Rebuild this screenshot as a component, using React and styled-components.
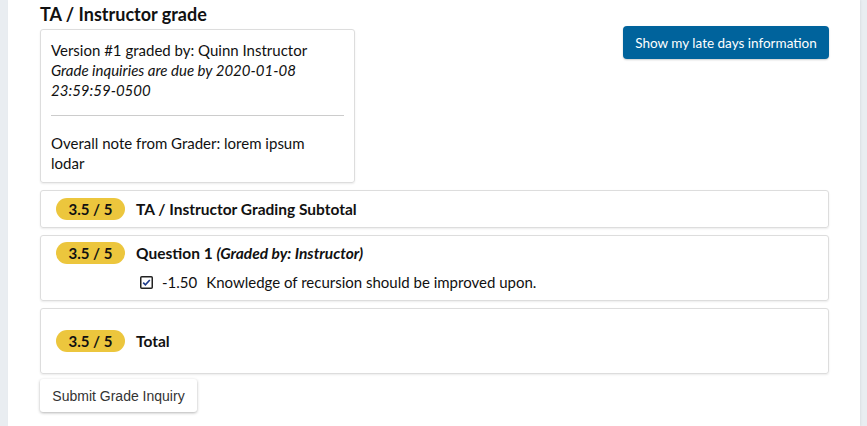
import React from "react";
import styled, { createGlobalStyle } from "styled-components";

const GlobalStyle = createGlobalStyle`
  html, body {
    margin: 0;
    padding: 0;
    background: #e9edf1;
  }
  body {
    font-family: Lato, "Noto Sans", sans-serif;
    color: #111;
  }
`;

const Page = styled.div`
  margin: 0 7px 0 8px;
  min-height: 426px;
  background: #fff;
  padding: 0 31px 0 32px;
  box-sizing: border-box;
  box-shadow: 1px 0 2px rgba(0, 0, 0, 0.06);
`;

const Top = styled.div`
  display: flex;
  justify-content: space-between;
  align-items: flex-start;
`;

const Heading = styled.h2`
  margin: 0;
  padding-top: 3px;
  font-size: 18px;
  line-height: 23px;
  font-weight: 700;
  height: 26px;
`;

const InfoBox = styled.div`
  width: 315px;
  box-sizing: border-box;
  border: 1px solid #ddd;
  border-radius: 3px;
  box-shadow: 0 1px 2px rgba(0, 0, 0, 0.08);
  padding: 10px 10px 9px 10px;
  font-size: 15px;
  line-height: 20px;
`;

const Italic = styled.div`
  font-style: italic;
`;

const Rule = styled.hr`
  border: 0;
  border-top: 1px solid #ccc;
  margin: 15px 0 17px;
`;

const LateButton = styled.button`
  flex-shrink: 0;
  white-space: nowrap;
  margin-top: 26px;
  width: 206px;
  height: 33px;
  padding: 0;
  border: 0;
  border-radius: 4px;
  background: #00639c;
  color: #fff;
  font-family: Lato, "Noto Sans", sans-serif;
  font-size: 13.5px;
  font-weight: 400;
  box-shadow: 0 1px 2px rgba(0, 0, 0, 0.2);
  cursor: pointer;
`;

const Cards = styled.div`
  margin-top: 7px;
  display: flex;
  flex-direction: column;
  gap: 7px;
`;

const Card = styled.div`
  border: 1px solid #ddd;
  border-radius: 3px;
  box-shadow: 0 1px 2px rgba(0, 0, 0, 0.08);
  padding: ${(p) => p.$pad || "6px 15px"};
  min-height: ${(p) => p.$minH || "auto"};
  box-sizing: border-box;
  display: flex;
  flex-direction: column;
  justify-content: center;
`;

const HeadRow = styled.div`
  display: flex;
  align-items: center;
  gap: 11px;
`;

const Badge = styled.span`
  display: inline-flex;
  align-items: center;
  justify-content: center;
  width: 69px;
  height: 22px;
  border-radius: 11px;
  background: #ecc63d;
  font-size: 15px;
  font-weight: 700;
  color: #111;
`;

const Title = styled.span`
  font-size: 15.5px;
  font-weight: 700;
  em {
    font-style: italic;
  }
`;

const Mark = styled.div`
  display: flex;
  align-items: center;
  margin: 8px 0 2px 84px;
  font-size: 15px;
  line-height: 20px;
  svg {
    margin-right: 9px;
  }
`;

const Points = styled.span`
  margin-right: 9px;
`;

const SubmitButton = styled.button`
  margin-top: 5px;
  width: 157px;
  height: 33px;
  border: 0;
  border-radius: 3px;
  background: #fff;
  color: #333;
  font-family: "Liberation Sans", Arial, sans-serif;
  font-size: 14px;
  box-shadow: 0 1px 3px rgba(0, 0, 0, 0.3);
  cursor: pointer;
`;

function CheckIcon() {
  return (
    <svg width="13" height="13" viewBox="0 0 13 13">
      <rect x="0.75" y="0.75" width="11.5" height="11.5" rx="1" fill="none" stroke="#222" strokeWidth="1.5" />
      <path d="M3.2 6.6 L5.4 8.8 L9.8 4" fill="none" stroke="#1c3a8a" strokeWidth="1.6" />
    </svg>
  );
}

export default function App() {
  return (
    <>
      <GlobalStyle />
      <Page>
        <Top>
          <div>
            <Heading>TA / Instructor grade</Heading>
            <InfoBox>
              <div>Version #1 graded by: Quinn Instructor</div>
              <Italic>
                Grade inquiries are due by 2020-01-08
                <br />
                23:59:59-0500
              </Italic>
              <Rule />
              <div>
                Overall note from Grader: lorem ipsum
                <br />
                lodar
              </div>
            </InfoBox>
          </div>
          <LateButton>Show my late days information</LateButton>
        </Top>
        <Cards>
          <Card $minH="38px">
            <HeadRow>
              <Badge>3.5 / 5</Badge>
              <Title>TA / Instructor Grading Subtotal</Title>
            </HeadRow>
          </Card>
          <Card $pad="5px 15px 5px" $minH="66px">
            <HeadRow>
              <Badge>3.5 / 5</Badge>
              <Title>
                Question 1 <em>(Graded by: Instructor)</em>
              </Title>
            </HeadRow>
            <Mark>
              <CheckIcon />
              <Points>-1.50</Points>
              Knowledge of recursion should be improved upon.
            </Mark>
          </Card>
          <Card $minH="66px">
            <HeadRow>
              <Badge>3.5 / 5</Badge>
              <Title>Total</Title>
            </HeadRow>
          </Card>
        </Cards>
        <SubmitButton>Submit Grade Inquiry</SubmitButton>
      </Page>
    </>
  );
}
